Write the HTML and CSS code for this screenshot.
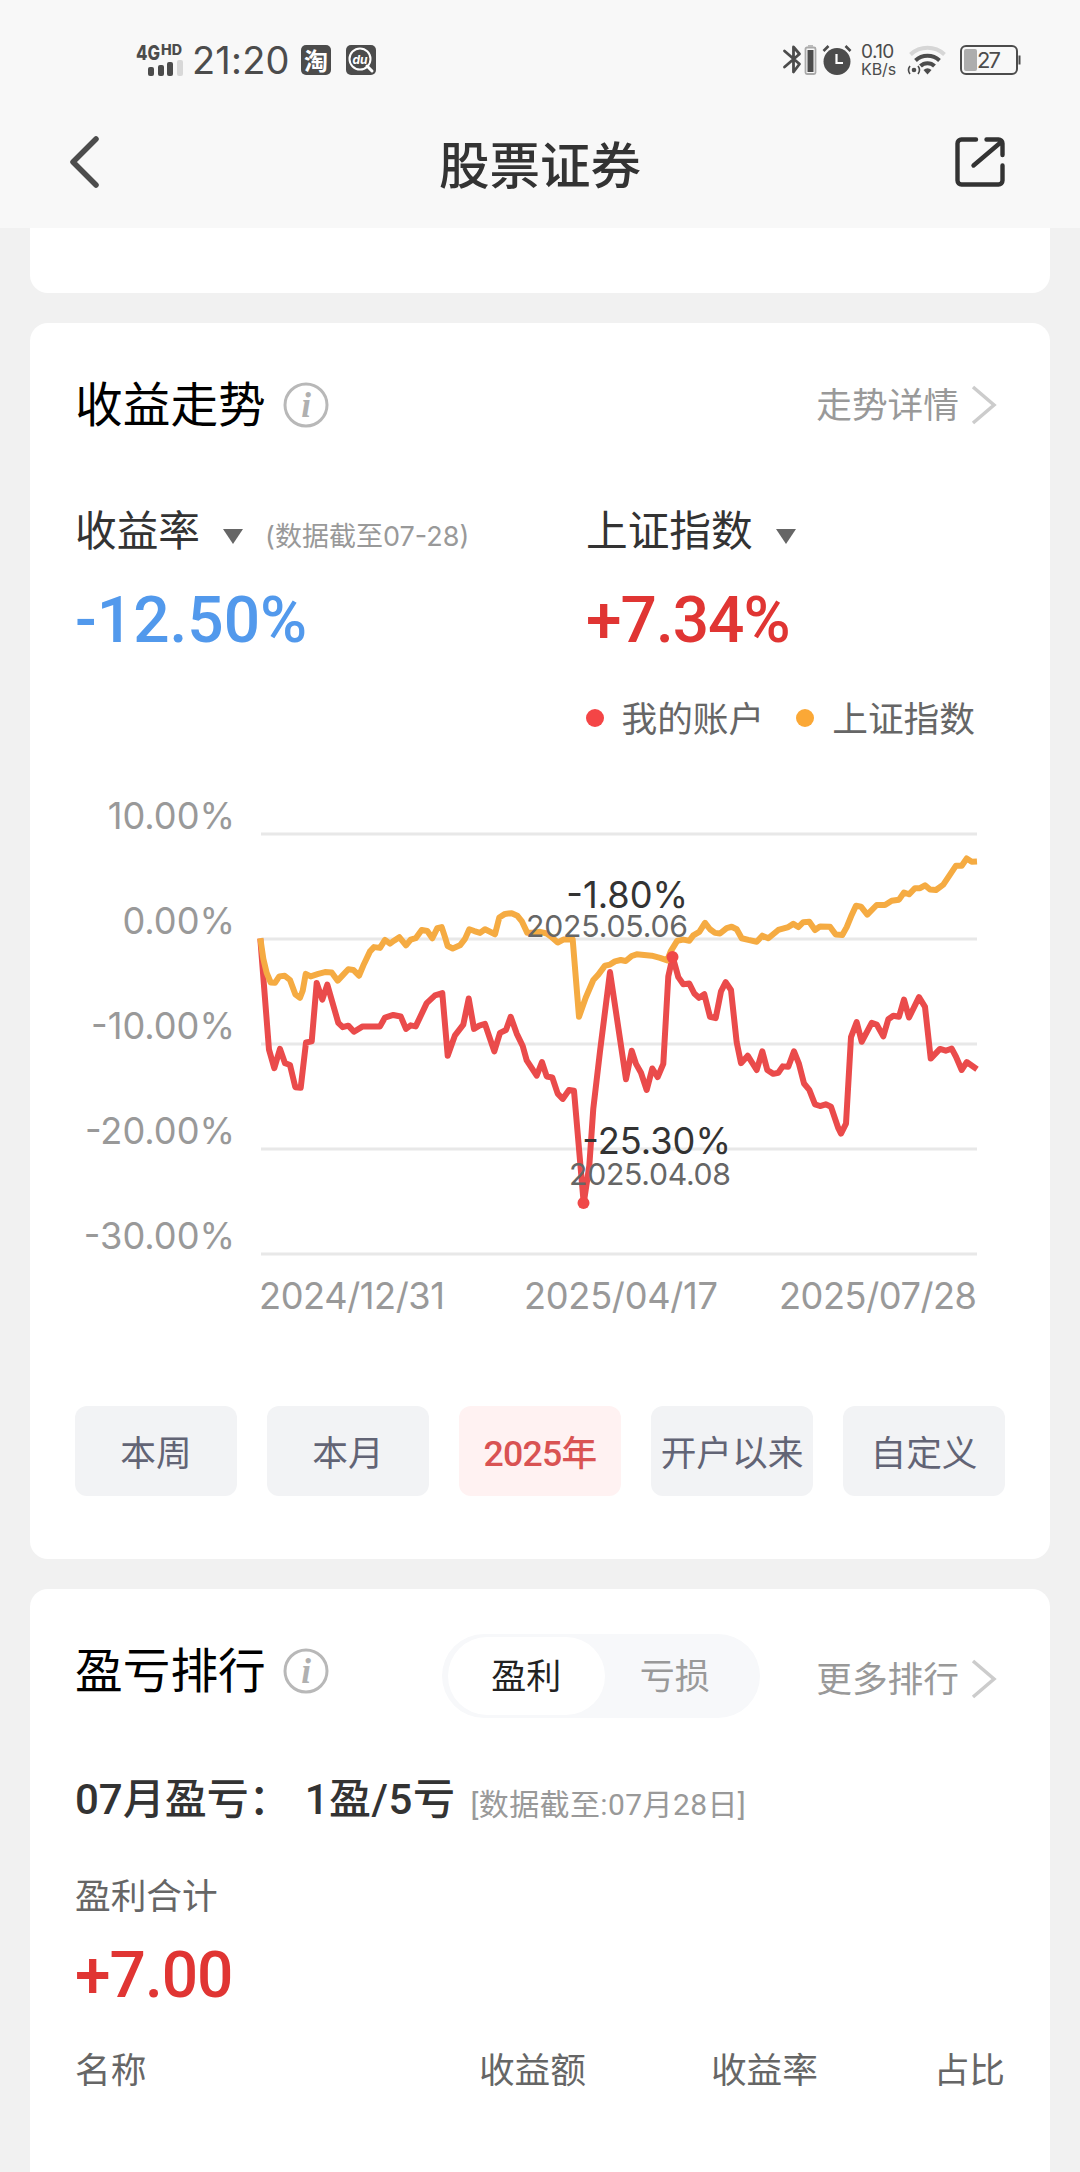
FILE: index.html
```
<!DOCTYPE html>
<html lang="zh-CN">
<head>
    <meta charset="UTF-8">
    <meta name="viewport" content="width=device-width, initial-scale=1.0">
    <title>股票证券</title>
    <link rel="stylesheet" href="styles.css">
</head>
<body>

    <!-- Header -->
    <header class="header">
        <div class="status-bar">
            <div class="status-left">
                <svg class="signal" width="48" height="34" viewBox="0 0 48 34">
                    <text class="net" x="0" y="17" textLength="24" lengthAdjust="spacingAndGlyphs">4G</text>
                    <text class="hd" x="25" y="12" textLength="21" lengthAdjust="spacingAndGlyphs">HD</text>
                    <rect x="12" y="24" width="6" height="9" rx="2"/>
                    <rect x="22" y="22" width="6" height="11" rx="2"/>
                    <rect x="31" y="19" width="6" height="14" rx="2"/>
                    <rect x="41" y="17" width="6" height="16" rx="2" fill="#d8d8d8"/>
                </svg>
                <span class="time">21:20</span>
                <span class="app-icon">淘</span>
                <svg class="app-search" width="30" height="30" viewBox="0 0 30 30">
                    <rect width="30" height="30" rx="5" fill="#4c4c4c"/>
                    <circle cx="14" cy="14" r="10.5" fill="none" stroke="#fff" stroke-width="2"/>
                    <path d="M21 21l5 5" stroke="#fff" stroke-width="3" stroke-linecap="round"/>
                    <text x="6.500" y="18.5">du</text>
                </svg>
            </div>
            <div class="status-right">
                <svg width="34" height="32" viewBox="0 0 34 32">
                    <path d="M1.500 7l15 13-6 8V3l6 7-15 13" fill="none" stroke="#4c4c4c" stroke-width="2.800" stroke-linejoin="round" stroke-linecap="round"/>
                    <rect x="22.500" y="3.500" width="10" height="26.500" rx="1.500" fill="none" stroke="#aaa" stroke-width="1.800"/>
                    <rect x="25" y="1" width="5" height="2" fill="#bbb"/>
                    <rect x="24.500" y="6" width="6" height="22" fill="#4c4c4c"/>
                </svg>
                <svg class="alarm" width="30" height="32" viewBox="0 0 30 32">
                    <circle cx="15" cy="17.500" r="13.500" fill="#4c4c4c"/>
                    <path d="M1.500 7l5-5M28.500 7l-5-5" stroke="#4c4c4c" stroke-width="2.600"/>
                    <path d="M14.500 10v9h6.500" fill="none" stroke="#fff" stroke-width="2.200"/>
                </svg>
                <span class="speed"><b>0.10</b><i>KB/s</i></span>
                <svg class="wifi" width="40" height="32" viewBox="0 0 40 32">
                    <g fill="none" stroke-width="4">
                        <path d="M3.500 10.500a25 25 0 0 1 34 0" stroke="#d6d6d6"/>
                        <path d="M8.500 16.500a17.500 17.500 0 0 1 24 0" stroke="#4c4c4c"/>
                        <path d="M13.500 22a10 10 0 0 1 14 0" stroke="#4c4c4c"/>
                    </g>
                    <path d="M16.500 26q4-3.500 8 0l-4 4.500z" fill="#4c4c4c"/>
                    <circle cx="7" cy="26" r="2.300" fill="#4c4c4c"/>
                    <path d="M3 22q-3 4 0 8M11 22q3 4 0 8" fill="none" stroke="#4c4c4c" stroke-width="1.600"/>
                </svg>
                <svg class="battery" width="62" height="32" viewBox="0 0 62 32">
                    <rect x="1" y="2" width="56" height="28" rx="5" fill="none" stroke="#4c4c4c" stroke-width="2"/>
                    <rect x="4" y="5" width="13" height="22" rx="2" fill="#adadad"/>
                    <rect x="58.500" y="11.500" width="2" height="9" fill="#4c4c4c"/>
                    <text x="17" y="23.500" textLength="24">27</text>
                </svg>
            </div>
        </div>
        <div class="nav">
            <svg width="34" height="56" viewBox="0 0 34 56">
                <path d="M29 5L6 28l23 23" fill="none" stroke="#4c4c4c" stroke-width="5.500" stroke-linecap="round" stroke-linejoin="round"/>
            </svg>
            <h1>股票证券</h1>
            <svg width="50" height="50" viewBox="0 0 50 50">
                <path d="M21 2.500H6.500a4 4 0 0 0-4 4v37a4 4 0 0 0 4 4h37a4 4 0 0 0 4-4V28.500M31.500 2.500h12a4 4 0 0 1 4 4V18M45 6L18.500 28.500" fill="none" stroke="#333" stroke-width="4.400" stroke-linecap="round"/>
            </svg>
        </div>
    </header>

    <main class="content">
        <section class="card card-prev"></section>

        <!-- Trend -->
        <section class="card card-trend">
            <div class="card-head">
                <h2>收益走势</h2>
                <svg class="info" width="46" height="46" viewBox="0 0 46 46">
                    <circle cx="23" cy="23" r="21" fill="none" stroke="#b8b8b8" stroke-width="3"/>
                    <text x="23" y="34.500">i</text>
                </svg>
                <a class="more"><span>走势详情</span>
                    <svg width="26" height="38" viewBox="0 0 26 38"><path d="M2 1l21 18L2 37" fill="none" stroke="#ccc" stroke-width="3.500"/></svg>
                </a>
            </div>

            <div class="metrics">
                <div class="metric">
                    <div class="metric-name"><span>收益率</span><i class="arrow"></i><small>(数据截至07-28)</small></div>
                    <div class="number blue">-12.50%</div>
                </div>
                <div class="metric">
                    <div class="metric-name"><span>上证指数</span><i class="arrow"></i></div>
                    <div class="number red">+7.34%</div>
                </div>
            </div>

            <div class="legend">
                <i class="dot dot-red"></i><span>我的账户</span>
                <i class="dot dot-orange"></i><span>上证指数</span>
            </div>

            <svg class="chart" width="930" height="540" viewBox="75 790 930 540">
                <g class="grid">
                    <path d="M261 834H977M261 939H977M261 1044H977M261 1149H977M261 1254H977"/>
                </g>
                <g class="axis axis-y">
                    <text x="235" y="829">10.00%</text>
                    <text x="235" y="934">0.00%</text>
                    <text x="235" y="1039">-10.00%</text>
                    <text x="235" y="1144">-20.00%</text>
                    <text x="235" y="1249">-30.00%</text>
                </g>
                <g class="axis">
                    <text x="259" y="1309" textLength="186">2024/12/31</text>
                    <text x="524" y="1309" textLength="194">2025/04/17</text>
                    <text x="779" y="1309" textLength="198">2025/07/28</text>
                </g>
                <g transform="translate(0 -55.71) scale(1 1.0714)">
                    <polyline class="line line-red" points="260.3,928 269,1031.7 274.3,1049 280,1031 285,1044.3 290,1046 295.3,1066.7 300.7,1067.3 306,1025 311.7,1024 316.7,969.5 322.3,985 327.3,971 338.3,1006.7 342.7,1010.7 348.3,1009.3 354,1015 362.7,1010 380,1010 385,1001.7 393.3,999.3 400.7,1000.7 406,1012.3 410.7,1009 415.7,1010 426.7,988.3 435,981 442.3,979 447.7,1037.3 455,1018.3 463.3,1008.3 468.7,984 474,1012.3 479.3,1009.3 485,1007.7 494.3,1033.3 500,1016 506,1013.3 510.7,1001 516.7,1016.7 522.7,1028.3 526.7,1041.7 536.7,1056 542,1043.3 546.7,1056.7 552.3,1057.7 557.7,1072.7 562.7,1077.7 569,1069.3 574,1070 583.7,1175 589.3,1140 593.3,1086.7 600,1033.3 610,959.3 616,996.7 626,1059.3 631.7,1032.7 636,1045 641,1053.3 646.7,1069.3 652.3,1049.3 657.7,1057.3 663.3,1045 668.3,963.3 672.7,945 678.3,964 683.3,970.7 689.3,970 694.3,979.3 699,983.3 704.3,980 710,1001 715.7,1002.3 721,977.3 725.7,968.7 731,976 736.7,1025 741,1044.3 747.7,1037.3 756.7,1050.7 762.3,1033.3 767.3,1050.7 773.3,1054.3 778.3,1053.3 782.7,1047.3 788.3,1047.7 794,1033.3 799,1045 804,1063.3 809.3,1069.3 815,1082.7 820,1084.3 825.7,1082.7 831,1085 838.3,1105 841,1110 846,1100.7 851,1020 856.7,1006 861.7,1024.3 871.7,1006.7 876.7,1008.3 883.3,1019.3 888.3,1003.3 893.3,1000 899,1001 904,985 909,1001.7 919,982.7 925,991.7 930.7,1040 940,1031 945.7,1032.7 951.7,1030.7 956,1038.3 961.7,1050.7 966.7,1043.3 977,1050"/>
                    <polyline class="line line-orange" points="260.3,927.7 263.3,946.7 266.7,960 270.7,969 275,969.3 279.3,963.3 284.7,962.7 290,966.7 295.3,980 300,983.3 302.7,976.7 305.7,961 310.7,963.3 318.3,961 325,959.3 331.7,959.7 337.7,967.3 343.3,961.7 348.3,956.7 353.3,957.3 359,962.7 364,951.7 370,940 374,936 380,936.7 385,929.3 390,932.7 394,930 399.3,926.7 406,934.3 410.7,929 415.7,927.7 421.7,920 427.3,921 432.3,927.7 437.3,918.3 441.7,917.3 445,926.7 447.7,935 452.7,937.3 460,934.3 465,928.3 469.3,919.3 474.3,921 480,922.7 485,919.3 495,924 499.3,908.3 505,905 511.7,904.3 517.3,906.7 521.7,911.7 527.3,922.7 533.3,922.7 540,921.7 546.7,923.3 551.7,926.7 557.7,931.7 563.3,929 572.7,929 579,1001 585.7,983.3 593.3,966.7 598.3,961.7 605,953.3 610,952.3 615,949.3 620.7,948 625.7,949 631.7,944.3 636.7,942.7 651.7,944 660,946 667.3,948.3 670.7,940 677.3,930 683.3,929 689.3,930 693.3,925 699.3,921.7 705,913.3 710,919.3 715,922.7 720,923.3 726.7,918.3 731.7,917 736.7,919.3 741.7,927.7 748.3,929.3 756.7,931 762.3,925.3 768.3,927.7 778.3,920 788.3,917.3 793.3,914.3 798.3,917.3 803.3,912.7 809.3,912.3 815,920 820,916.7 830,917 835.7,924.3 842.3,924.7 846.7,917.3 851.7,906 856,897.3 861,898.3 867.3,905.7 876.7,896.7 885,896.7 891.7,892.7 899,891.7 904,885 909,886.7 915,881 920,881 925,878.3 930,882.3 936,882.7 943.3,877.7 950,868.3 956,860 961.7,860 966.7,853.3 971.7,856.3 977,856"/>
                </g>
                <circle cx="672.500" cy="957" r="6" fill="#f04848"/>
                <circle cx="583.500" cy="1203" r="6" fill="#f04848"/>
                <g class="mark">
                    <text class="mark-value" x="688" y="907.500">-1.80%</text>
                    <text class="mark-date" x="688" y="937" textLength="162">2025.05.06</text>
                    <text class="mark-value" x="731" y="1153.500">-25.30%</text>
                    <text class="mark-date" x="731" y="1184.500" textLength="162">2025.04.08</text>
                </g>
            </svg>

            <div class="periods">
                <button>本周</button>
                <button>本月</button>
                <button class="active">2025年</button>
                <button>开户以来</button>
                <button>自定义</button>
            </div>
        </section>

        <!-- Ranking -->
        <section class="card card-rank">
            <div class="card-head">
                <h2>盈亏排行</h2>
                <svg class="info" width="46" height="46" viewBox="0 0 46 46">
                    <circle cx="23" cy="23" r="21" fill="none" stroke="#b8b8b8" stroke-width="3"/>
                    <text x="23" y="34.500">i</text>
                </svg>
                <div class="toggle">
                    <span class="on">盈利</span>
                    <span>亏损</span>
                </div>
                <a class="more"><span>更多排行</span>
                    <svg width="26" height="38" viewBox="0 0 26 38"><path d="M2 1l21 18L2 37" fill="none" stroke="#ccc" stroke-width="3.500"/></svg>
                </a>
            </div>
            <div class="summary"><span class="month">07月盈亏：</span><span class="count">1盈/5亏</span><small>[数据截至:07月28日]</small></div>
            <div class="total-name">盈利合计</div>
            <div class="number red">+7.00</div>
            <div class="table-head">
                <span>名称</span>
                <span>收益额</span>
                <span>收益率</span>
                <span>占比</span>
            </div>
        </section>
    </main>

</body>
</html>
```
FILE: styles.css
```
/* General */
* {
    box-sizing: border-box;
}

body {
    margin: 0;
    height: 2172px;
    overflow: hidden;
    background: #f1f1f1;
    color: #333;
    font-family: Inter, "Noto Sans CJK SC", sans-serif;
    white-space: nowrap;
}

svg {
    display: block;
    flex-shrink: 0;
    overflow: visible;
}

h1, h2 {
    margin: 0;
    font-family: "Noto Sans CJK SC", sans-serif;
}

/* Header */
.header {
    height: 228px;
    background: #f8f8f8;
}

.status-bar {
    display: flex;
    justify-content: space-between;
    height: 106px;
    padding: 42px 58px 0 136px;
    color: #4c4c4c;
}

.status-left,
.status-right {
    display: flex;
    height: 36px;
    align-items: center;
}

.signal {
    fill: #4c4c4c;
}

.signal .net {
    font: 800 20px Inter, sans-serif;
}

.signal .hd {
    font: 800 14px Inter, sans-serif;
}

.time {
    width: 109px;
    margin-left: 8px;
    font-size: 38px;
    letter-spacing: 0.2px;
}

.app-icon {
    width: 30px;
    height: 30px;
    margin-right: 15px;
    border-radius: 5px;
    background: #4c4c4c;
    color: #fff;
    font: bold 24px/29px "Noto Sans CJK SC", sans-serif;
    text-align: center;
}

.app-search text {
    fill: #fff;
    font: italic bold 12px Inter, sans-serif;
}

.alarm {
    margin-left: 5px;
}

.speed {
    display: flex;
    flex-direction: column;
    width: 36px;
    margin-left: 9px;
}

.speed b {
    font: 400 19px/18px Inter, sans-serif;
    letter-spacing: -0.6px;
}

.speed i {
    font: 400 16px/17px Inter, sans-serif;
    letter-spacing: -0.1px;
}

.wifi {
    margin-left: 10px;
}

.battery {
    margin-left: 13px;
}

.battery text {
    fill: #4c4c4c;
    font: 400 22px Inter, sans-serif;
}

.nav {
    display: flex;
    align-items: center;
    justify-content: space-between;
    height: 112px;
    padding: 0 75px 0 67px;
}

.nav h1 {
    margin-left: 24px;
    color: #333;
    font-size: 50.500px;
    font-weight: 500;
    line-height: 70px;
}

/* Cards */
.content {
    padding: 0 30px;
}

.card {
    margin-bottom: 30px;
    padding: 0 45px;
    border-radius: 18px;
    background: #fff;
}

.card-prev {
    height: 65px;
    border-radius: 0 0 18px 18px;
}

.card-trend {
    height: 1236px;
}

.card-rank {
    height: 600px;
}

.card-head {
    display: flex;
    align-items: center;
    height: 164px;
}

.card-head h2 {
    margin-bottom: 6px;
    color: #000;
    font-size: 47.700px;
    font-weight: 400;
    line-height: 64px;
}

.info {
    margin-left: 17px;
}

.info text {
    fill: #b0b0b0;
    font: italic bold 35px "Liberation Serif", serif;
    text-anchor: middle;
}

.more {
    display: flex;
    align-items: center;
    gap: 12px;
    margin-left: auto;
    margin-right: 8px;
    color: #999;
    font-size: 35.700px;
}

.more span {
    margin-bottom: 5px;
}

/* Metrics */
.metrics {
    display: grid;
    grid-template-columns: 511px 1fr;
    margin-top: 13px;
}

.metric-name {
    display: flex;
    align-items: center;
    height: 60px;
    font-size: 41.700px;
}

.metric-name span {
    margin-bottom: 4px;
}

.arrow {
    margin: 13px 22px 0 23px;
    border: solid transparent;
    border-width: 15px 10px 0;
    border-top-color: #666;
}

.metric-name small {
    margin-top: 8px;
    color: #999;
    font-size: 27px;
}

.number {
    height: 60px;
    font: 500 64px/64px Roboto, sans-serif;
}

.metric .number {
    margin-top: 29px;
}

.blue {
    color: #5299ec;
}

.red {
    color: #e03533;
    letter-spacing: -1px;
}

/* Legend */
.legend {
    display: flex;
    align-items: center;
    justify-content: flex-end;
    height: 40px;
    margin: 49px 30px 0 0;
    color: #666;
    font-size: 35.700px;
}

.legend span {
    margin-bottom: 4px;
}

.dot {
    width: 18px;
    height: 18px;
    margin: 0 18px 0 32px;
    border-radius: 50%;
}

.dot-red {
    background: #f44546;
}

.dot-orange {
    background: #fba836;
}

/* Chart */
.chart {
    margin-top: 52px;
    font-family: Inter, sans-serif;
}

.grid path {
    stroke: #e8e8e8;
    stroke-width: 3;
}

.axis text {
    fill: #999;
    font-size: 36.200px;
}

.axis-y text,
.mark text {
    text-anchor: end;
}

.line {
    fill: none;
    stroke-width: 6;
    stroke-linejoin: round;
    vector-effect: non-scaling-stroke;
}

.line-red {
    stroke: #ea4b4b;
}

.line-orange {
    stroke: #f5ab42;
}

.mark-value {
    fill: #333;
    font-size: 36.200px;
}

.mark-date {
    fill: #666;
    font-size: 30.200px;
}

/* Period buttons */
.periods {
    display: grid;
    grid-template-columns: repeat(5, 1fr);
    gap: 30px;
    margin-top: 76px;
}

.periods button {
    height: 90px;
    padding: 0 0 2px;
    border: none;
    border-radius: 12px;
    background: #f2f3f5;
    color: #626475;
    font: 400 35.700px Roboto, "Noto Sans CJK SC", sans-serif;
}

.periods .active {
    background: #fff2f2;
    color: #d95353;
    font-weight: 500;
    letter-spacing: -0.8px;
}

/* Ranking */
.card-rank .card-head {
    height: 174px;
}

.card-rank h2 {
    margin-bottom: 16px;
}

.card-rank .info {
    margin-bottom: 11px;
}

.toggle {
    display: flex;
    width: 318px;
    height: 84px;
    margin-left: 113px;
    padding: 3px 6px;
    border-radius: 42px;
    background: #f7f8fa;
    color: #999;
    font-size: 35px;
    line-height: 79px;
    text-align: center;
}

.toggle span {
    width: 140px;
}

.toggle .on {
    width: 157px;
    border-radius: 39px;
    background: #fff;
    color: #222;
}

.card-rank .more {
    padding-top: 6px;
}

.summary {
    display: flex;
    align-items: center;
    height: 50px;
    margin-top: 12px;
    font: 500 42px/50px Roboto, "Noto Sans CJK SC", sans-serif;
}

.count {
    margin-left: 14px;
    letter-spacing: 0.5px;
}

.summary small {
    margin: 9px 0 0 15px;
    color: #999;
    font: 400 30px/40px Roboto, "Noto Sans CJK SC", sans-serif;
    letter-spacing: 0.4px;
}

.total-name {
    margin: 51px 0 28px;
    color: #666;
    font-size: 35.700px;
    line-height: 40px;
}

.table-head {
    display: grid;
    grid-template-columns: 201px 310px 232px 1fr;
    margin-top: 46px;
    color: #666;
    font-size: 35.700px;
    line-height: 40px;
    text-align: right;
}

.table-head span:first-child {
    text-align: left;
}
```
